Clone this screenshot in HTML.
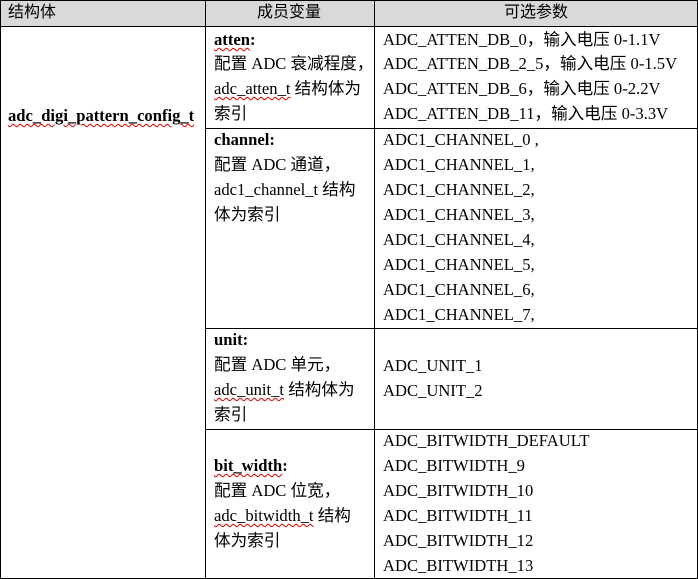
<!DOCTYPE html>
<html><head><meta charset="utf-8"><style>
body{margin:0;width:698px;height:579px;background:#fff;position:relative;overflow:hidden;font-family:"Liberation Serif","Noto Sans CJK SC",serif;font-size:16.6px;color:#000}
.h{position:absolute;left:0;top:0;width:698px;height:27px;background:#d9d9d9}
.l{position:absolute;background:#000}
.t{position:absolute;white-space:nowrap;line-height:20px}
.w{text-decoration:underline wavy #d00;text-decoration-thickness:1px;text-underline-offset:2px}
.hd{font-family:"Liberation Sans","Noto Sans CJK SC",sans-serif;font-size:16px}
</style></head><body>
<div class="h"></div>
<div class="l" style="left:0;top:0;width:698px;height:1px"></div>
<div class="l" style="left:0;top:26px;width:698px;height:1px"></div>
<div class="l" style="left:205px;top:128px;width:493px;height:1px"></div>
<div class="l" style="left:205px;top:328px;width:493px;height:1px"></div>
<div class="l" style="left:205px;top:429px;width:493px;height:1px"></div>
<div class="l" style="left:0;top:578px;width:698px;height:1px"></div>
<div class="l" style="left:0;top:0;width:1px;height:579px"></div>
<div class="l" style="left:205px;top:0;width:1px;height:579px"></div>
<div class="l" style="left:374px;top:0;width:1px;height:579px"></div>
<div class="l" style="left:697px;top:0;width:1px;height:579px"></div>

<div class="t hd" style="left:8px;top:3px">结构体</div>
<div class="t hd" style="left:257px;top:3px">成员变量</div>
<div class="t hd" style="left:504px;top:3px">可选参数</div>

<div class="t" style="left:8px;top:106px"><b class="w">adc_digi_pattern_config_t</b></div>

<div class="t" style="left:214px;top:30px"><b class="w">atten</b><b>:</b></div>
<div class="t" style="left:214px;top:54px">配置 ADC 衰减程度，</div>
<div class="t" style="left:214px;top:79px"><span class="w">adc_atten_t</span> 结构体为</div>
<div class="t" style="left:214px;top:104px">索引</div>

<div class="t" style="left:214px;top:130px"><b>channel:</b></div>
<div class="t" style="left:214px;top:155px">配置 ADC 通道，</div>
<div class="t" style="left:214px;top:180px">adc1_channel_t 结构</div>
<div class="t" style="left:214px;top:205px">体为索引</div>

<div class="t" style="left:214px;top:330px"><b>unit:</b></div>
<div class="t" style="left:214px;top:355px">配置 ADC 单元，</div>
<div class="t" style="left:214px;top:380px"><span class="w">adc_unit_t</span> 结构体为</div>
<div class="t" style="left:214px;top:405px">索引</div>

<div class="t" style="left:214px;top:456px"><b class="w">bit_width</b><b>:</b></div>
<div class="t" style="left:214px;top:481px">配置 ADC 位宽，</div>
<div class="t" style="left:214px;top:506px"><span class="w">adc_bitwidth_t</span> 结构</div>
<div class="t" style="left:214px;top:531px">体为索引</div>

<div class="t" style="left:383px;top:30px">ADC_ATTEN_DB_0，输入电压 0-1.1V</div>
<div class="t" style="left:383px;top:54px">ADC_ATTEN_DB_2_5，输入电压 0-1.5V</div>
<div class="t" style="left:383px;top:79px">ADC_ATTEN_DB_6，输入电压 0-2.2V</div>
<div class="t" style="left:383px;top:104px">ADC_ATTEN_DB_11，输入电压 0-3.3V</div>

<div class="t" style="left:383px;top:130px">ADC1_CHANNEL_0 ,</div>
<div class="t" style="left:383px;top:155px">ADC1_CHANNEL_1,</div>
<div class="t" style="left:383px;top:180px">ADC1_CHANNEL_2,</div>
<div class="t" style="left:383px;top:205px">ADC1_CHANNEL_3,</div>
<div class="t" style="left:383px;top:230px">ADC1_CHANNEL_4,</div>
<div class="t" style="left:383px;top:255px">ADC1_CHANNEL_5,</div>
<div class="t" style="left:383px;top:280px">ADC1_CHANNEL_6,</div>
<div class="t" style="left:383px;top:305px">ADC1_CHANNEL_7,</div>

<div class="t" style="left:383px;top:356px">ADC_UNIT_1</div>
<div class="t" style="left:383px;top:381px">ADC_UNIT_2</div>

<div class="t" style="left:383px;top:431px">ADC_BITWIDTH_DEFAULT</div>
<div class="t" style="left:383px;top:456px">ADC_BITWIDTH_9</div>
<div class="t" style="left:383px;top:481px">ADC_BITWIDTH_10</div>
<div class="t" style="left:383px;top:506px">ADC_BITWIDTH_11</div>
<div class="t" style="left:383px;top:531px">ADC_BITWIDTH_12</div>
<div class="t" style="left:383px;top:556px">ADC_BITWIDTH_13</div>
</body></html>
